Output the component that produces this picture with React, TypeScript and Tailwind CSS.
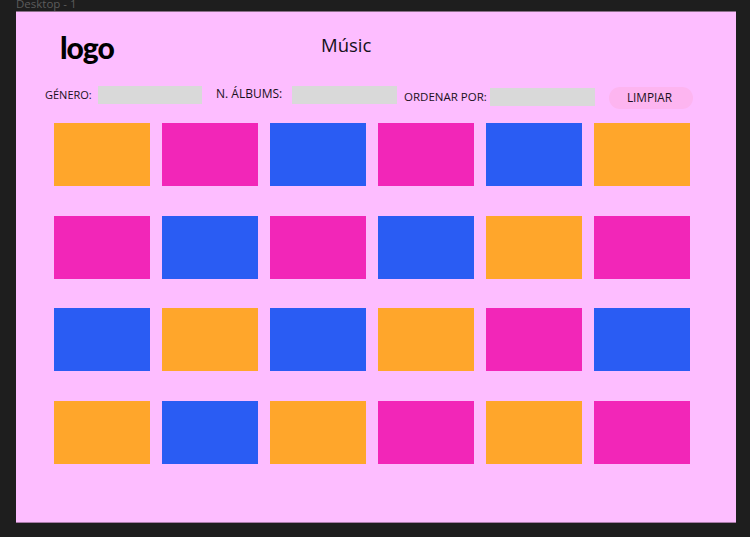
const colors: Record<string, string> = {
  o: 'bg-[#ffa62b]',
  p: 'bg-[#f226b8]',
  b: 'bg-[#2a5cf3]',
};

const rows = ['opbpbo', 'pbpbop', 'bobopb', 'obopop'];

function Filter({ label, labelClass, boxClass }: { label: string; labelClass: string; boxClass: string }) {
  return (
    <div className="flex items-start">
      <span className={`leading-4 text-[#1a1020] whitespace-nowrap ${labelClass}`}>{label}</span>
      <div className={`h-[17.5px] bg-[#d9d9d9] ${boxClass}`} />
    </div>
  );
}

export default function App() {
  return (
    <div className="w-[750px] h-[537px] bg-[#1e1e1e] overflow-hidden font-['Open_Sans',sans-serif]">
      <div className="h-[11px] pl-4 text-[11.5px] leading-[7px] text-[#5c5c5c] overflow-hidden">Desktop - 1</div>
      <div className="ml-4 w-[720px] h-[512px] bg-[#fdbdff] border-t border-b border-t-[#8a6f8a] border-b-[#a87aa8]">
        <div className="flex items-start h-[74px] pt-[15px] pl-[44px]">
          <span className="w-[261px] text-[30px] leading-10 font-black tracking-[-1px] text-black font-['Lato',sans-serif]">logo</span>
          <span className="text-[18.5px] leading-9 text-[#14101a]">Músic</span>
        </div>
        <div className="flex items-start h-[37px] pl-[29px]">
          <Filter label="GÉNERO:" labelClass="w-[53px] mt-[1px] text-[11px]" boxClass="w-[104px]" />
          <div className="w-[14px]" />
          <Filter label="N. ÁLBUMS:" labelClass="w-[76px] text-[12px]" boxClass="w-[105px]" />
          <div className="w-[7px]" />
          <div className="mt-[2px]">
            <Filter label="ORDENAR POR:" labelClass="w-[86px] mt-[1px] text-[11.5px]" boxClass="w-[105px]" />
          </div>
          <button className="ml-[13.5px] mt-[0.5px] w-[84px] h-[22.5px] pr-[2px] rounded-full bg-[#fdb5f0] text-[11.8px] text-[#1a1020]">LIMPIAR</button>
        </div>
        <div className="flex flex-col gap-y-[29.5px] pl-[38px] pt-[0.25px]">
          {rows.map((row, i) => (
            <div key={i} className="flex gap-x-3">
              {row.split('').map((c, j) => (
                <div key={j} className={`w-[96px] h-[63px] ${colors[c]}`} />
              ))}
            </div>
          ))}
        </div>
      </div>
    </div>
  );
}
